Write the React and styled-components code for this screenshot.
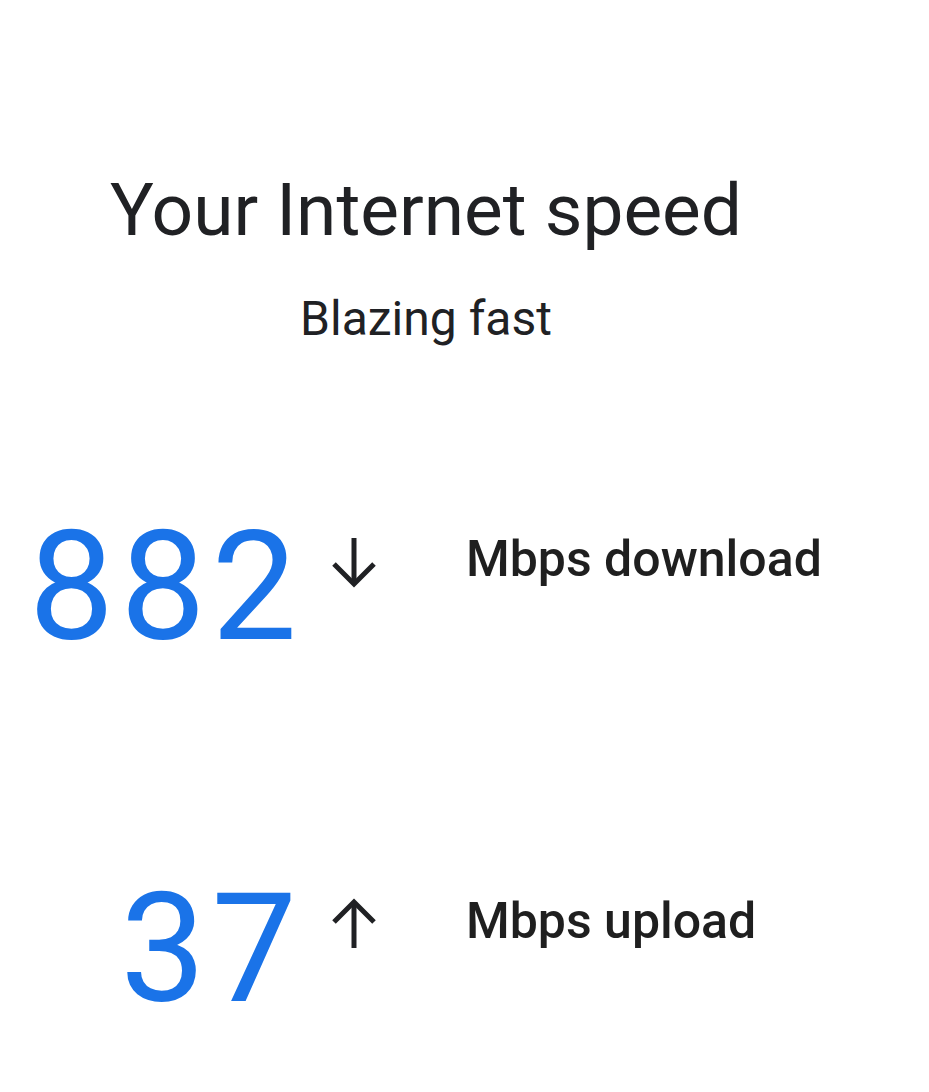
import React from "react";
import styled, { createGlobalStyle } from "styled-components";

const GlobalStyle = createGlobalStyle`
  html, body {
    margin: 0;
    padding: 0;
    background: #ffffff;
  }
  body {
    font-family: Roboto, "Noto Sans", Arial, sans-serif;
    color: #202124;
  }
`;

const StyledPage = styled.div`
  width: 929px;
  min-height: 1092px;
  padding-top: 168px;
  box-sizing: border-box;
`;
const StyledHeader = styled.header`
  width: 852px;
  text-align: center;
`;
const StyledTitle = styled.h1`
  margin: 0;
  font-size: 73px;
  font-weight: 400;
  line-height: 84px;
  color: #202124;
`;
const StyledSubtitle = styled.p`
  margin: 38px 0 0;
  font-size: 48px;
  font-weight: 400;
  line-height: 58px;
  color: #202124;
`;
const StyledResults = styled.div`
  display: flex;
  flex-direction: column;
  gap: 210px;
  margin-top: 163px;
`;
const StyledRow = styled.div`
  display: grid;
  grid-template-columns: 297px 48px 1fr;
  align-items: start;
`;
const StyledValue = styled.span`
  margin-right: -6px;
  font-size: 152px;
  line-height: 152px;
  font-weight: 400;
  letter-spacing: 6px;
  color: #1a73e8;
  text-align: right;
`;
const StyledArrow = styled.svg`
  width: 48px;
  height: 50px;
  margin-left: 33px;
  margin-top: ${(p) => p.$offset}px;
`;
const StyledLabel = styled.span`
  margin-left: 121px;
  margin-top: 18px;
  font-size: 50px;
  line-height: 60px;
  font-weight: 500;
  color: #1f1f1f;
  white-space: nowrap;
`;

const Arrow = ({ up, offset }) => (
  <StyledArrow
    viewBox="0 0 48 50"
    $offset={offset}
    fill="none"
    stroke="#202124"
    strokeWidth="5"
    strokeLinejoin="miter"
  >
    {up ? (
      <>
        <path d="M24 50V4" />
        <path d="M4 24L24 4l20 20" />
      </>
    ) : (
      <>
        <path d="M24 0v46" />
        <path d="M4 26l20 20 20-20" />
      </>
    )}
  </StyledArrow>
);

const results = [
  { value: "882", label: "Mbps download", up: false, offset: 27 },
  { value: "37", label: "Mbps upload", up: true, offset: 25 },
];

const App = () => (
  <StyledPage>
    <GlobalStyle />
    <StyledHeader>
      <StyledTitle>Your Internet speed</StyledTitle>
      <StyledSubtitle>Blazing fast</StyledSubtitle>
    </StyledHeader>
    <StyledResults>
      {results.map((r) => (
        <StyledRow key={r.label}>
          <StyledValue>{r.value}</StyledValue>
          <Arrow up={r.up} offset={r.offset} />
          <StyledLabel>{r.label}</StyledLabel>
        </StyledRow>
      ))}
    </StyledResults>
  </StyledPage>
);

export default App;
